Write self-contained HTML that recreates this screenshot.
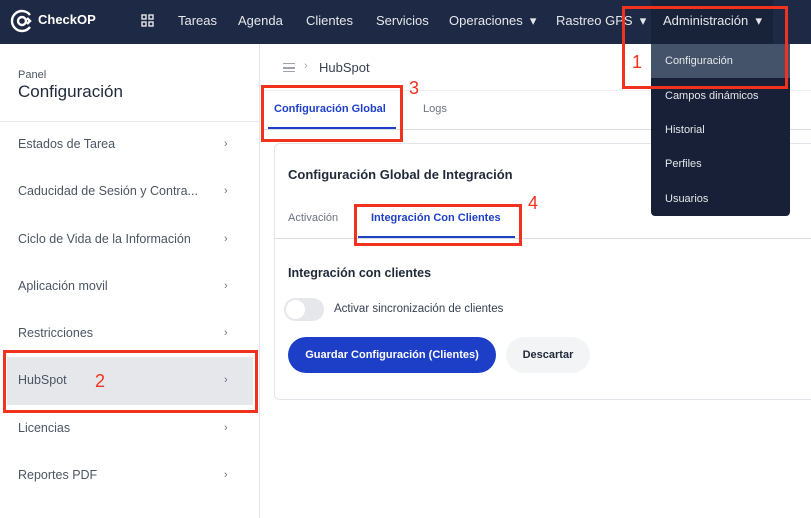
<!DOCTYPE html>
<html><head><meta charset="utf-8"><style>
*{margin:0;padding:0;box-sizing:border-box}
body{width:811px;height:518px;overflow:hidden;background:#fff;font-family:"Liberation Sans",sans-serif;position:relative;color:#1f2937}
.a{position:absolute}
.nav{left:0;top:0;width:811px;height:44px;background:#1e2a45}
.nt{color:#e5e7eb;font-size:13px;top:13px}
.side{left:0;top:44px;width:260px;height:474px;border-right:1px solid #e3e5ea}
.it{left:18px;font-size:12.5px;color:#4b5563}
.ch{left:224px;font-size:11px;color:#6b7280}
.dd{left:651px;top:44px;width:139px;height:172px;background:#172036;border-radius:0 0 4px 4px;z-index:5}
.di{left:665px;color:#e5e7eb;font-size:11px;z-index:7}
.red{border:3px solid #f0321e;z-index:8}
.rn{color:#f0321e;font-size:18px;z-index:8}
</style></head><body>
<div class="a nav"></div>
<svg class="a" style="left:10px;top:9px" width="24" height="24" viewBox="0 0 24 24" fill="none" stroke="#fff" stroke-width="2.4"><path d="M20 6A10 10 0 1 0 20 18"/><circle cx="12" cy="12" r="4"/><path d="M17 9l3 3-3 3"/></svg>
<div class="a" style="left:38px;top:12px;color:#fff;font-weight:bold;font-size:13px">CheckOP</div>
<svg class="a" style="left:141px;top:14px" width="13" height="13" viewBox="0 0 13 13" fill="none" stroke="#e5e7eb" stroke-width="1.4"><rect x="1" y="1" width="4" height="4"/><rect x="8" y="1" width="4" height="4"/><rect x="1" y="8" width="4" height="4"/><rect x="8" y="8" width="4" height="4"/></svg>
<div class="a nt" style="left:178px">Tareas</div>
<div class="a nt" style="left:238px">Agenda</div>
<div class="a nt" style="left:306px">Clientes</div>
<div class="a nt" style="left:376px">Servicios</div>
<div class="a nt" style="left:449px">Operaciones &nbsp;▾</div>
<div class="a nt" style="left:556px">Rastreo GPS &nbsp;▾</div>
<div class="a" style="left:651px;top:0;width:122px;height:44px;background:#182239"></div>
<div class="a nt" style="left:663px">Administración &nbsp;▾</div>

<div class="a side"></div>
<div class="a" style="left:18px;top:69px;font-size:11px;color:#4b5563">Panel</div>
<div class="a" style="left:18px;top:82px;font-size:17px;color:#1f2937">Configuración</div>
<div class="a" style="left:0;top:121px;width:260px;height:1px;background:#e5e7eb"></div>
<div class="a" style="left:7px;top:357px;width:246px;height:48px;background:#e5e7eb"></div>
<div class="a it" style="top:137px">Estados de Tarea</div><div class="a ch" style="top:138px">›</div>
<div class="a it" style="top:184px">Caducidad de Sesión y Contra...</div><div class="a ch" style="top:185px">›</div>
<div class="a it" style="top:232px">Ciclo de Vida de la Información</div><div class="a ch" style="top:233px">›</div>
<div class="a it" style="top:279px">Aplicación movil</div><div class="a ch" style="top:280px">›</div>
<div class="a it" style="top:326px">Restricciones</div><div class="a ch" style="top:327px">›</div>
<div class="a it" style="top:373px">HubSpot</div><div class="a ch" style="top:374px">›</div>
<div class="a it" style="top:421px">Licencias</div><div class="a ch" style="top:422px">›</div>
<div class="a it" style="top:468px">Reportes PDF</div><div class="a ch" style="top:469px">›</div>
<div class="a red" style="left:3px;top:350px;width:255px;height:63px"></div>
<div class="a rn" style="left:95px;top:371px">2</div>

<div class="a" style="left:283px;top:63px;width:12px;height:9px;border-top:1.5px solid #9ca3af;border-bottom:1.5px solid #9ca3af"></div>
<div class="a" style="left:283px;top:67px;width:12px;height:1.5px;background:#9ca3af"></div>
<div class="a" style="left:304px;top:60px;font-size:11px;color:#9ca3af">›</div>
<div class="a" style="left:319px;top:60px;font-size:13px;color:#374151">HubSpot</div>
<div class="a" style="left:261px;top:90px;width:550px;height:1px;background:#eef0f3"></div>
<div class="a" style="left:274px;top:103px;font-size:11px;color:#1d3fc8;font-weight:bold">Configuración Global</div>
<div class="a" style="left:423px;top:103px;font-size:11px;color:#6b7280">Logs</div>
<div class="a" style="left:261px;top:129px;width:550px;height:1px;background:#d9dce2"></div>
<div class="a" style="left:268px;top:127px;width:128px;height:2px;background:#1d3fc8"></div>
<div class="a red" style="left:261px;top:85px;width:142px;height:57px"></div>
<div class="a rn" style="left:409px;top:78px">3</div>

<div class="a" style="left:274px;top:143px;width:560px;height:257px;border:1px solid #e3e5ea;border-radius:6px"></div>
<div class="a" style="left:288px;top:167px;font-size:13px;font-weight:bold;color:#1f2937">Configuración Global de Integración</div>
<div class="a" style="left:288px;top:212px;font-size:11px;color:#6b7280">Activación</div>
<div class="a" style="left:371px;top:212px;font-size:11px;color:#1d3fc8;font-weight:bold">Integración Con Clientes</div>
<div class="a" style="left:275px;top:238px;width:536px;height:1px;background:#d9dce2"></div>
<div class="a" style="left:358px;top:236px;width:157px;height:2px;background:#1d3fc8"></div>
<div class="a red" style="left:354px;top:204px;width:168px;height:42px"></div>
<div class="a rn" style="left:528px;top:193px">4</div>
<div class="a" style="left:288px;top:266px;font-size:12.5px;font-weight:bold;color:#1f2937">Integración con clientes</div>
<div class="a" style="left:284px;top:298px;width:40px;height:23px;border-radius:12px;background:#e5e7eb"></div>
<div class="a" style="left:286px;top:300px;width:19px;height:19px;border-radius:50%;background:#fff"></div>
<div class="a" style="left:334px;top:303px;font-size:11.5px;color:#374151">Activar sincronización de clientes</div>
<div class="a" style="left:288px;top:337px;width:208px;height:36px;border-radius:18px;background:#1d3fc8;color:#fff;font-size:11px;font-weight:bold;text-align:center;line-height:36px">Guardar Configuración (Clientes)</div>
<div class="a" style="left:506px;top:337px;width:84px;height:36px;border-radius:18px;background:#f3f4f6;color:#1f2937;font-size:11px;font-weight:bold;text-align:center;line-height:36px">Descartar</div>

<div class="a dd"></div>
<div class="a" style="left:651px;top:44px;width:139px;height:34px;background:#45536a;z-index:6"></div>
<div class="a di" style="top:55px">Configuración</div>
<div class="a di" style="top:90px">Campos dinámicos</div>
<div class="a di" style="top:124px">Historial</div>
<div class="a di" style="top:158px">Perfiles</div>
<div class="a di" style="top:193px">Usuarios</div>
<div class="a red" style="left:622px;top:6px;width:166px;height:83px"></div>
<div class="a rn" style="left:632px;top:52px">1</div>
</body></html>
